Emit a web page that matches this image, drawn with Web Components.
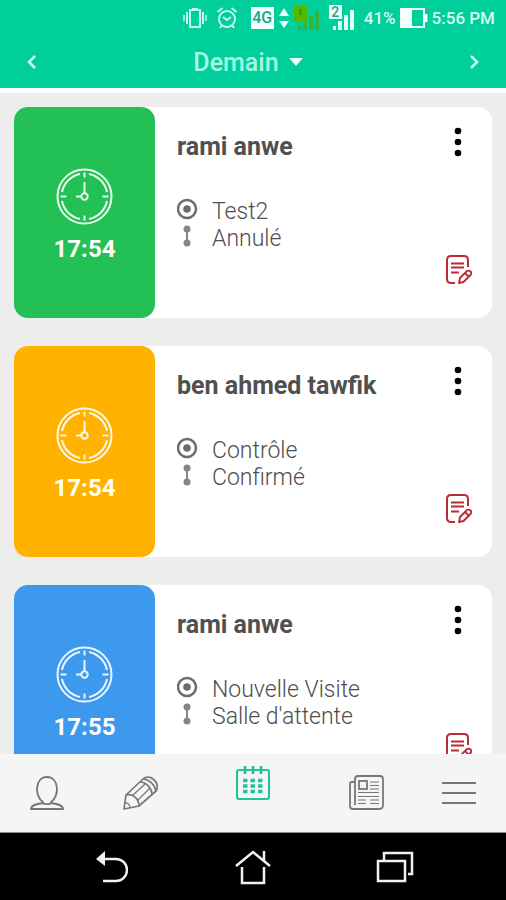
<!DOCTYPE html>
<html lang="fr">
<head>
<meta charset="utf-8">
<meta name="viewport" content="width=device-width, initial-scale=1">
<title>Rendez-vous</title>
<style>
  html, body {
    height: 100%;
  }

  body {
    margin: 0;
    font-family: Roboto, "Liberation Sans", sans-serif;
    background: #ededed;
  }
</style>
</head>
<body>
<agenda-app>
  <status-bar slot="status" battery="41%" time="5:56 PM"></status-bar>
  <day-header slot="header">Demain</day-header>
  <appointment-card color="#22c055" time="17:54">
    <span slot="name">rami anwe</span>
    <span slot="type">Test2</span>
    <span slot="state">Annulé</span>
  </appointment-card>
  <appointment-card color="#ffb300" time="17:54">
    <span slot="name">ben ahmed tawfik</span>
    <span slot="type">Contrôle</span>
    <span slot="state">Confirmé</span>
  </appointment-card>
  <appointment-card color="#3c99ee" time="17:55">
    <span slot="name">rami anwe</span>
    <span slot="type">Nouvelle Visite</span>
    <span slot="state">Salle d'attente</span>
  </appointment-card>
  <tab-bar slot="footer"></tab-bar>
  <system-bar slot="footer"></system-bar>
</agenda-app>

<script>
"use strict";
(() => {
  const buttonReset = `
    button {
      margin: 0;
      padding: 0;
      border: 0;
      background: none;
      color: inherit;
      font: inherit;
      cursor: pointer;
    }
    svg {
      display: block;
      flex: none;
    }
  `;

  class AgendaApp extends HTMLElement {
    constructor() {
      super();
      this.attachShadow({ mode: "open" });
      this.shadowRoot.innerHTML = `
        <style>
          :host {
            display: flex;
            flex-direction: column;
            height: 100vh;
          }
          header {
            background: #00ce9b;
            border-bottom: 5px solid #fff;
          }
          main {
            flex: 1;
            min-height: 0;
            overflow: hidden;
            display: flex;
            flex-direction: column;
            gap: 28px;
            padding: 14px;
          }
        </style>
        <header>
          <slot name="status"></slot>
          <slot name="header"></slot>
        </header>
        <main><slot></slot></main>
        <footer><slot name="footer"></slot></footer>
      `;
    }
  }
  customElements.define("agenda-app", AgendaApp);

  class StatusBar extends HTMLElement {
    constructor() {
      super();
      this.attachShadow({ mode: "open" });
    }
    connectedCallback() {
      this.shadowRoot.innerHTML = `
        <style>
          :host {
            display: flex;
            align-items: center;
            justify-content: flex-end;
            gap: 9px;
            height: 36px;
            padding-right: 11px;
            color: #d4fdf1;
            font-size: 17px;
            font-weight: 500;
          }
          svg {
            display: block;
            flex: none;
          }
          .group {
            display: flex;
            align-items: center;
            gap: 4px;
          }
          .net {
            width: 23px;
            background: #f2fffb;
            color: #16a882;
            font-size: 16px;
            line-height: 22px;
            text-align: center;
          }
          .sim {
            display: grid;
          }
          .sim > * {
            grid-area: 1 / 1;
          }
          .sim span {
            justify-self: start;
            align-self: start;
            width: 13px;
            background: #f2fffb;
            color: #16a882;
            font-size: 14px;
            line-height: 14px;
            text-align: center;
          }
        </style>
        <svg width="24" height="22" viewBox="0 0 24 22" fill="none" stroke="#c4fbea" stroke-width="2">
          <rect x="7" y="3" width="10" height="17"/>
          <path d="M9 2h6M4 5v12M20 5v12"/>
          <path d="M1 8v6M23 8v6" stroke-width="1.5"/>
        </svg>
        <svg width="22" height="24" viewBox="0 0 22 24" fill="none" stroke="#c4fbea" stroke-width="2">
          <circle cx="11" cy="13" r="8"/>
          <path d="M1.500 6l5-4M20.500 6l-5-4M4 22l2-3M18 22l-2-3M7 11l4 3 4-3"/>
        </svg>
        <div class="group">
          <span></span>
          <span class="net">4G</span>
          <svg width="12" height="24" viewBox="0 0 12 24" fill="#eafff9">
            <path d="M6 2l5 8H1zM6 22l5-7H1z"/>
          </svg>
          <svg width="26" height="26" viewBox="0 0 26 26" fill="#35b33a">
            <path d="M0 1h13v15H0z" fill="#52b800"/>
            <path d="M4 21h4v4H4zM9 17h4v8H9zM15 11h4v14h-4zM21 6h4v19h-4z"/>
            <path d="M5 4h3v6H5z" fill="#3a9e10"/>
          </svg>
        </div>
        <div class="sim">
          <svg width="26" height="26" viewBox="0 0 26 26" fill="#e2fff6">
            <path d="M4 21h3v4H4zM9 16h4v9H9zM15 10h4v15h-4zM21 5h4v20h-4z"/>
          </svg>
          <span>2</span>
        </div>
        <div class="group">
          <span>${this.getAttribute("battery")}</span>
          <svg width="28" height="20" viewBox="0 0 28 20" fill="none" stroke="#f2fffb" stroke-width="2">
            <rect x="1" y="1" width="23" height="18"/>
            <path d="M1 1h10v18H1z" fill="#f2fffb"/>
            <path d="M26 6v8" stroke-width="3"/>
          </svg>
          <time>${this.getAttribute("time")}</time>
        </div>
      `;
    }
  }
  customElements.define("status-bar", StatusBar);

  class DayHeader extends HTMLElement {
    constructor() {
      super();
      this.attachShadow({ mode: "open" });
      this.shadowRoot.innerHTML = `
        <style>
          ${buttonReset}
          :host {
            display: flex;
            align-items: center;
            justify-content: space-between;
            height: 52px;
            padding: 0 18px;
            color: #a4f9e0;
          }
          button {
            min-width: 28px;
            height: 40px;
            display: flex;
            align-items: center;
            justify-content: center;
          }
          .day {
            gap: 10px;
            padding-right: 10px;
            font-size: 25px;
            font-weight: 500;
          }
        </style>
        <button aria-label="Jour précédent">
          <svg width="12" height="14" viewBox="0 0 12 14" fill="none" stroke="#c9fff0" stroke-width="2.500"><path d="M9 1L3 7l6 6"/></svg>
        </button>
        <button class="day">
          <slot></slot>
          <svg width="14" height="8" viewBox="0 0 14 8" fill="#eafff9"><path d="M0 0h14L7 8z"/></svg>
        </button>
        <button aria-label="Jour suivant">
          <svg width="12" height="14" viewBox="0 0 12 14" fill="none" stroke="#c9fff0" stroke-width="2.500"><path d="M3 1l6 6-6 6"/></svg>
        </button>
      `;
    }
  }
  customElements.define("day-header", DayHeader);

  class AppointmentCard extends HTMLElement {
    constructor() {
      super();
      this.attachShadow({ mode: "open" });
    }
    connectedCallback() {
      this.shadowRoot.innerHTML = `
        <style>
          ${buttonReset}
          :host {
            display: block;
            flex: none;
          }
          article {
            display: flex;
            min-height: 211px;
            border-radius: 14px;
            background: #fff;
          }
          .slot-time {
            flex: none;
            width: 141px;
            box-sizing: border-box;
            padding-top: 61px;
            display: flex;
            flex-direction: column;
            align-items: center;
            gap: 10px;
            border-radius: 14px;
            background: ${this.getAttribute("color")};
            color: #fff;
            font-size: 24px;
            line-height: 28px;
            font-weight: 700;
          }
          .info {
            flex: 1;
            padding: 26px 0 26px 22px;
            color: #4e4e4e;
            font-size: 23px;
            line-height: 27px;
            font-weight: 300;
          }
          h2 {
            margin: 0 0 37px;
            color: #505050;
            font-size: 25px;
            line-height: 28px;
            font-weight: 700;
          }
          .row {
            display: flex;
            gap: 14px;
          }
          .actions {
            display: flex;
            flex-direction: column;
            align-items: center;
            justify-content: space-between;
            padding: 20px 20px 33px 0;
          }
        </style>
        <article>
          <div class="slot-time">
            <svg width="57" height="57" viewBox="0 0 57 57" fill="none" stroke="#fff" stroke-opacity=".9" stroke-width="2">
              <circle cx="28.500" cy="28.500" r="27"/>
              <path d="M33 6a23 23 0 0 1 18 18M51 33a23 23 0 0 1-18 18M24 51A23 23 0 0 1 6 33M6 24A23 23 0 0 1 24 6"/>
              <path d="M28.500 4.500v5M28.500 47.500v5M4.500 28.500h6M46.500 28.500h6M28.500 14v11M20 28.500h5"/>
              <circle cx="28.500" cy="28.500" r="3.200"/>
            </svg>
            <time>${this.getAttribute("time")}</time>
          </div>
          <div class="info">
            <h2><slot name="name"></slot></h2>
            <div class="row">
              <svg width="21" height="22" viewBox="0 0 21 22" fill="none" stroke="#6c6c6c" stroke-width="2.500">
                <circle cx="10" cy="11" r="9"/>
                <circle cx="10" cy="11" r="3.800" fill="#6c6c6c" stroke="none"/>
              </svg>
              <slot name="type"></slot>
            </div>
            <div class="row">
              <svg width="21" height="22" viewBox="0 0 21 22" fill="#858585">
                <circle cx="10" cy="4" r="3.500"/>
                <circle cx="10" cy="18" r="3.500"/>
                <path d="M9 4h2v14H9z"/>
              </svg>
              <slot name="state"></slot>
            </div>
          </div>
          <div class="actions">
            <button aria-label="Options">
              <svg width="26" height="30" viewBox="0 0 26 30">
                <circle cx="12" cy="4" r="3.300"/>
                <circle cx="12" cy="15" r="3.300"/>
                <circle cx="12" cy="26" r="3.300"/>
              </svg>
            </button>
            <button aria-label="Modifier la note">
              <svg width="26" height="30" viewBox="0 0 26 30" fill="none" stroke="#bc2b35" stroke-width="2" stroke-linejoin="round">
                <path d="M22 12V5q0-4-4-4H5Q1 1 1 5v19q0 4 4 4h4"/>
                <path d="M5 8.500h13M5 12.500h13M5 17.500h8" stroke-width="1.800"/>
                <path d="M13 28l1-5 7-7q2-1 3.500.5t0 3.500l-7 7zM19 18l3.500 3.500" stroke-width="1.900"/>
              </svg>
            </button>
          </div>
        </article>
      `;
    }
  }
  customElements.define("appointment-card", AppointmentCard);

  class TabBar extends HTMLElement {
    constructor() {
      super();
      this.attachShadow({ mode: "open" });
      this.shadowRoot.innerHTML = `
        <style>
          ${buttonReset}
          :host {
            display: block;
          }
          nav {
            display: grid;
            grid-template-columns: 7fr 7fr 10fr 7fr 7fr;
            height: 78px;
            border-bottom: 1px solid #8c8c8c;
            background: #f5f5f5;
          }
          button {
            display: flex;
            align-items: center;
            justify-content: center;
          }
          .active {
            padding-bottom: 20px;
          }
        </style>
        <nav>
          <button aria-label="Patients">
            <svg width="34" height="36" viewBox="0 0 34 36" fill="none" stroke="#777" stroke-width="1.800">
              <path d="M13 27C4 21 5 2 17 2s13 19 4 25"/>
              <path d="M13 26.500v1.500C6 29 1 30 1 34h32c0-4-5-5-12-6v-1.500M12 28c2 1.500 8 1.500 10 0"/>
            </svg>
          </button>
          <button aria-label="Notes">
            <svg width="36" height="36" viewBox="0 0 36 36" fill="none" stroke="#777" stroke-width="1.700" stroke-linejoin="round">
              <path d="M2 34l2-14L21 4c7-6 18 4 13 12L17 31z"/>
              <path d="M4 20c7-2 13 4 13 11M21 4c6 0 12 6 13 12M18 7c6 0 12 6 12 13"/>
              <path d="M10 21L23 9M15 26L28 13M2 28c4-1 6 2 6 5" stroke-width="1.200"/>
            </svg>
          </button>
          <button class="active" aria-label="Agenda" aria-current="page">
            <svg width="36" height="36" viewBox="0 0 36 36" fill="none" stroke="#1fc39a" stroke-width="2">
              <rect x="2" y="5" width="32" height="29" rx="2"/>
              <path d="M10 1v8M18 1v8M26 1v8" stroke-width="2.500"/>
              <path d="M8 15.500h20M8 21h20M8 26.500h20" stroke-width="3.500" stroke-dasharray="4.500 3"/>
            </svg>
          </button>
          <button aria-label="Actualités">
            <svg width="36" height="36" viewBox="0 0 36 36" fill="none" stroke="#777" stroke-width="1.800">
              <path d="M7 7H4Q2 7 2 9v22q0 3 3 3h26q4 0 4-4V4q0-3-3-3H10Q7 1 7 4v26"/>
              <rect x="11" y="6" width="8" height="8"/>
              <path d="M22 7h9M22 10.500h9M22 14h9M10 17.500h21M10 21.500h21M10 25h8M22 25h9M10 28.500h8M22 28.500h9" stroke-width="1.200"/>
            </svg>
          </button>
          <button aria-label="Menu">
            <svg width="34" height="24" viewBox="0 0 34 24" fill="none" stroke="#777" stroke-width="2">
              <path d="M0 2h34M0 12h34M0 22h34"/>
            </svg>
          </button>
        </nav>
      `;
    }
  }
  customElements.define("tab-bar", TabBar);

  class SystemBar extends HTMLElement {
    constructor() {
      super();
      this.attachShadow({ mode: "open" });
      this.shadowRoot.innerHTML = `
        <style>
          ${buttonReset}
          :host {
            display: flex;
            justify-content: center;
            height: 67px;
            background: #000;
          }
          button {
            width: 28%;
            display: flex;
            align-items: center;
            justify-content: center;
          }
        </style>
        <button aria-label="Retour">
          <svg width="34" height="34" viewBox="0 0 34 34" fill="none" stroke="#f2f2f2" stroke-width="2.500">
            <path d="M9 9h13a11 11 0 0 1 0 22H9"/>
            <path d="M2 9l9-8v15z" fill="#f2f2f2" stroke="none"/>
          </svg>
        </button>
        <button aria-label="Accueil">
          <svg width="36" height="36" viewBox="0 0 36 36" fill="none" stroke="#f2f2f2" stroke-width="2.500">
            <path d="M1 17L18 3l17 14M7 18v16h22V18M29 12V2"/>
          </svg>
        </button>
        <button aria-label="Applications récentes">
          <svg width="38" height="32" viewBox="0 0 38 32" fill="none" stroke="#f2f2f2" stroke-width="2.500">
            <rect x="2" y="10" width="27" height="20"/>
            <path d="M8 9V2h28v21h-4"/>
          </svg>
        </button>
      `;
    }
  }
  customElements.define("system-bar", SystemBar);
})();
</script>
</body>
</html>
